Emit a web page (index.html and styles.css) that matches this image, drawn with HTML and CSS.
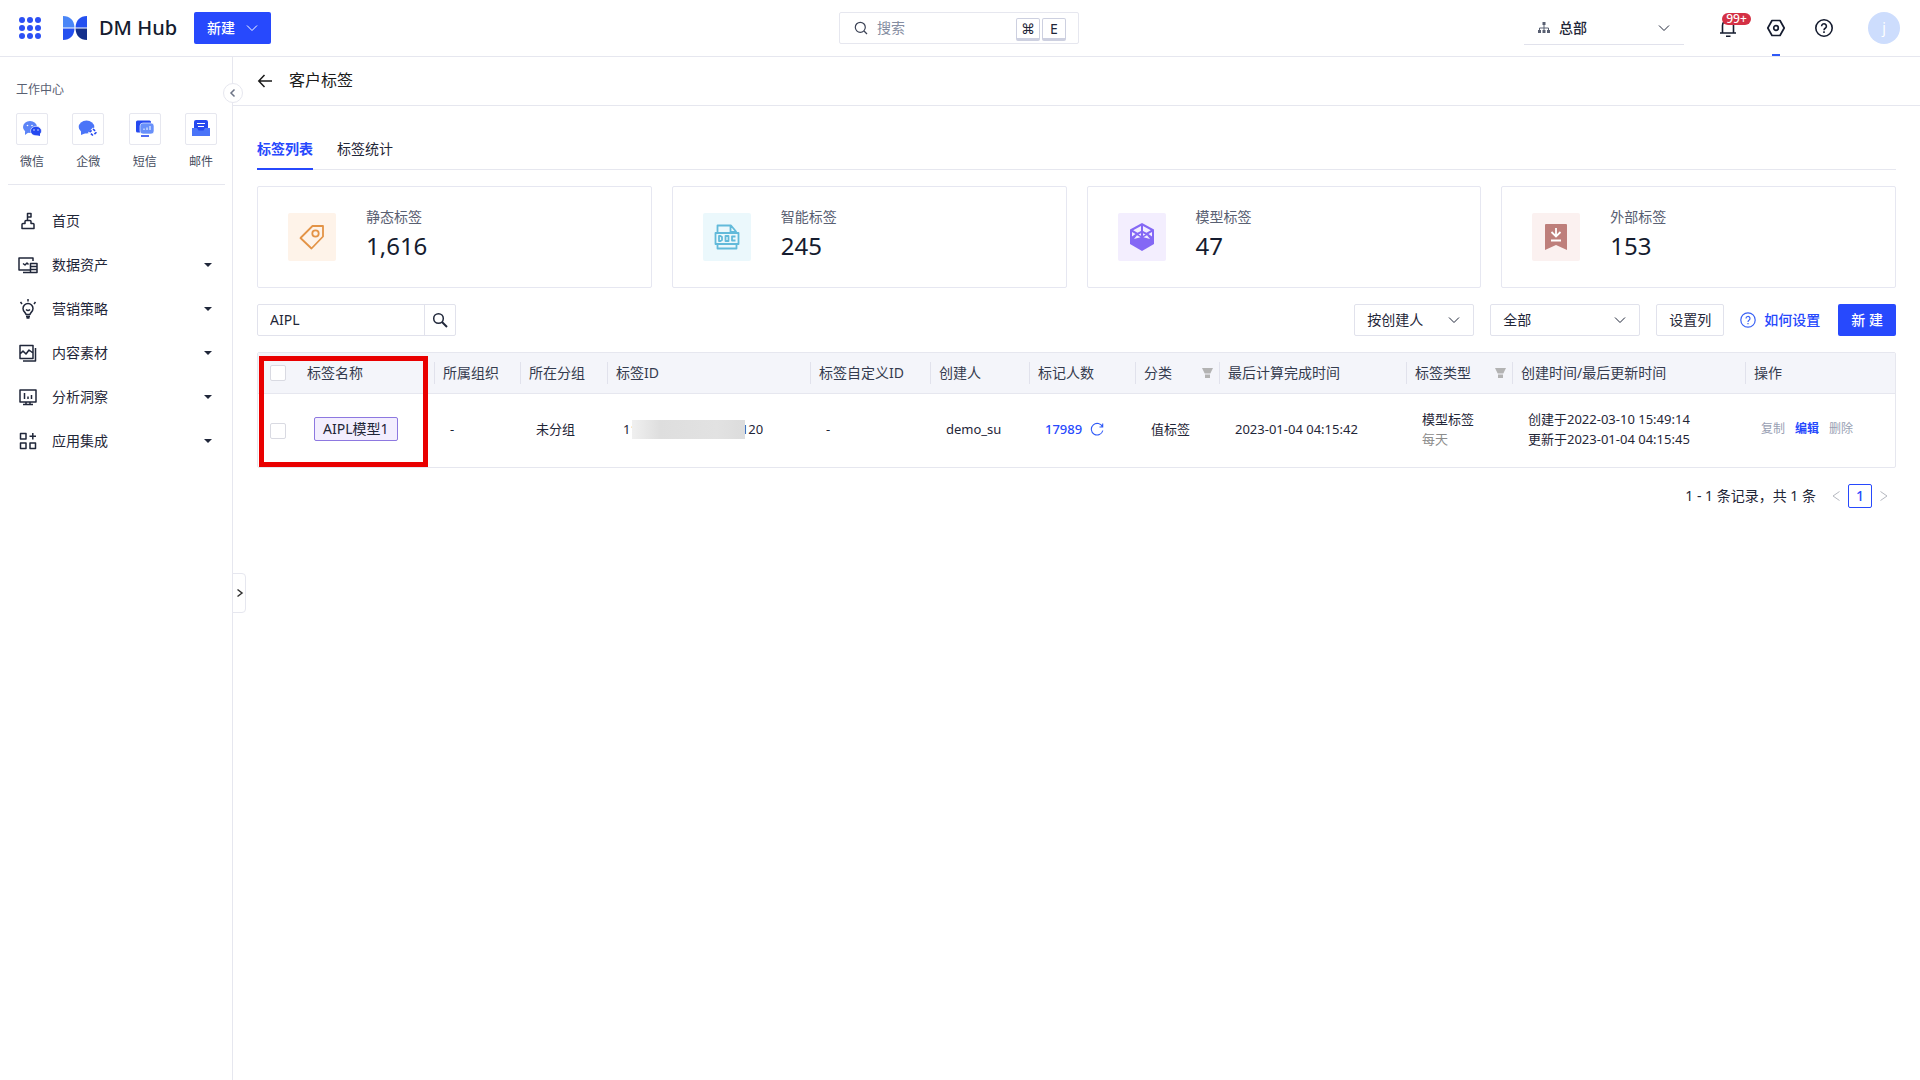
FILE: index.html
```html
<!DOCTYPE html>
<html lang="zh-CN">
<head>
<meta charset="utf-8">
<title>客户标签 - DM Hub</title>
<link rel="stylesheet" href="styles.css">
</head>
<body>
<header class="topbar">
  <div class="topbar-left">
    <button class="icon-btn apps" aria-label="应用">
      <svg width="24" height="24" viewBox="0 0 24 24" fill="#2c50f5"><circle cx="4" cy="4" r="3"/><circle cx="12" cy="4" r="3"/><circle cx="20" cy="4" r="3"/><circle cx="4" cy="12" r="3"/><circle cx="12" cy="12" r="3"/><circle cx="20" cy="12" r="3"/><circle cx="4" cy="20" r="3"/><circle cx="12" cy="20" r="3"/><circle cx="20" cy="20" r="3"/></svg>
    </button>
    <a class="brand" href="#">
      <svg width="24" height="24" viewBox="0 0 24 24"><path fill="#4a86f7" d="M0 0c7 0 11 4 11.500 11.500H0z"/><path fill="#2450f0" d="M24 0c-7 0-11 4-11.500 11.500H24z"/><path fill="#2450f0" d="M0 12.500h11.500C11 20 7 24 0 24z"/><path fill="#14308c" d="M24 12.500H12.500C13 20 17 24 24 24z"/></svg>
      <span>DM Hub</span>
    </a>
    <button class="btn-primary btn-create">新建
      <svg width="12" height="12" viewBox="0 0 12 12" fill="none" stroke="#fff"><path d="M1 3.500l5 5 5-5"/></svg>
    </button>
  </div>
  <div class="global-search">
    <svg width="14" height="14" viewBox="0 0 14 14" fill="none" stroke="#3c4356" stroke-width="1.200"><circle cx="6.300" cy="6.300" r="5"/><path d="M10 10l3 3"/></svg>
    <input type="text" placeholder="搜索" aria-label="搜索">
    <kbd>⌘</kbd><kbd>E</kbd>
  </div>
  <div class="topbar-right">
    <label class="org">
      <svg width="12" height="12" viewBox="0 0 12 12" fill="none" stroke="#596072"><path d="M6 3v5M1.500 8V6h9v2"/><g fill="#596072" stroke="none"><rect x="4.500" y="0" width="3" height="3"/><rect x="0" y="8" width="3" height="3"/><rect x="4.500" y="8" width="3" height="3"/><rect x="9" y="8" width="3" height="3"/></g></svg>
      <select aria-label="组织"><option>总部</option></select>
      <svg class="chev" width="12" height="12" viewBox="0 0 12 12" fill="none" stroke="#20273a"><path d="M1 3.500l5 5 5-5"/></svg>
    </label>
    <button class="icon-btn bell" aria-label="通知">
      <svg width="20" height="20" viewBox="0 0 20 20" fill="none" stroke="#151c2f" stroke-width="1.600"><path d="M4.500 15V7.500a5.500 5.500 0 0111 0V15M2 15h16M8 18.200h4.500"/></svg>
      <span class="badge">99+</span>
    </button>
    <button class="icon-btn settings" aria-label="设置">
      <svg width="20" height="20" viewBox="0 0 20 20" fill="none" stroke="#151c2f" stroke-width="1.700" stroke-linejoin="round"><path d="M6 2.500h8l4.200 7.500-4.200 7.500H6L1.800 10z"/><circle cx="10" cy="10" r="2.300"/></svg>
    </button>
    <button class="icon-btn" aria-label="帮助">
      <svg width="20" height="20" viewBox="0 0 20 20" fill="none" stroke="#151c2f" stroke-width="1.600"><circle cx="10" cy="10" r="8.200"/><path d="M7.600 8.200a2.400 2.400 0 114 1.800C10.500 10.700 10 11 10 12.200M10 13.300v1.600"/></svg>
    </button>
    <button class="avatar" aria-label="账户">j</button>
  </div>
</header>
<div class="layout">
  <aside class="sidebar">
    <h2>工作中心</h2>
    <div class="shortcuts">
      <a href="#"><i><svg width="20" height="20" viewBox="0 0 20 20"><ellipse cx="8" cy="8" rx="7" ry="6" fill="#5c84f7"/><path d="M3 12v4l4-3z" fill="#5c84f7"/><ellipse cx="14" cy="12" rx="5.500" ry="4.700" fill="#2549f0" stroke="#fff" stroke-width=".6"/><path d="M18 14v3l-4-1z" fill="#2549f0"/><g fill="#fff"><circle cx="5.500" cy="6.500" r=".8"/><circle cx="10" cy="6.500" r=".8"/><circle cx="12" cy="11" r=".7"/><circle cx="16" cy="11" r=".7"/></g></svg></i><span>微信</span></a>
      <a href="#"><i><svg width="20" height="20" viewBox="0 0 20 20"><ellipse cx="8.500" cy="8" rx="7.800" ry="6.500" fill="#4a74f8"/><path d="M3 12v4l5-2z" fill="#4a74f8"/><path d="M15 8.500l5 5-5 4-5-4z" fill="#fff"/><path d="M15 10l3.500 3.200L15 16.500l-3.500-3.300z" fill="none" stroke="#2549f0" stroke-width="1.600" stroke-dasharray="2.800 2"/></svg></i><span>企微</span></a>
      <a href="#"><i><svg width="20" height="20" viewBox="0 0 20 20"><rect x="1" y="1.500" width="15" height="12" rx="1.500" fill="#2549f0"/><rect x="5" y="4" width="14" height="11" rx="3" fill="#6890fa" stroke="#fff" stroke-width=".6"/><path d="M9 11V9.500M12 11V8.500M15 11V7" stroke="#fff"/><path d="M6 17h8" stroke="#2549f0" stroke-width="1.600"/></svg></i><span>短信</span></a>
      <a href="#"><i><svg width="20" height="20" viewBox="0 0 20 20"><path d="M3 3q0-2 2-2h10q2 0 2 2v9H3z" fill="#2549f0"/><path d="M6 4.500h8M7 7.500h6" stroke="#fff"/><path d="M1 9h5l1.500 2.500h5L14 9h5v8H1z" fill="#4a74f8"/></svg></i><span>邮件</span></a>
    </div>
    <nav class="menu">
      <a href="#"><svg width="20" height="20" viewBox="0 0 20 20"><path d="M4 17.500v-4q0-1 1-1h2v-2q0-1 1-1h4q1 0 1 1v2h2q1 0 1 1v4zM9.500 9.500V2.500H13v3.500H9.500"/></svg><span>首页</span></a>
      <a href="#"><svg width="20" height="20" viewBox="0 0 20 20"><path d="M12 15H1V3h14v3M5 8.500l2 1.500 2-2 1.500 1.500M5 17.500h7M12.500 8.500h6.500v9h-6.500zM12.500 11.500H19M12.500 14.500H19"/></svg><span>数据资产</span><b></b></a>
      <a href="#"><svg width="20" height="20" viewBox="0 0 20 20"><path d="M8 15.500c0-2-3-2.500-3-6a5 5 0 0110 0c0 3.500-3 4-3 6zM8 17.500h4M8.500 19h3M8 10.500q2 2 4 0M10 0v2.500M2.500 3L4 5M17.500 3L16 5"/></svg><span>营销策略</span><b></b></a>
      <a href="#"><svg width="20" height="20" viewBox="0 0 20 20"><path d="M2 2.500h13v13H2zM17.500 5v13H5M2 11l3-3 3 3 3-4 4 3"/></svg><span>内容素材</span><b></b></a>
      <a href="#"><svg width="20" height="20" viewBox="0 0 20 20"><path d="M2 3h16v12H2zM6.500 6v6M10 9.500V12M13.500 8v4M8 15v2.500M12 15v2.500M5 17.500h10"/></svg><span>分析洞察</span><b></b></a>
      <a href="#"><svg width="20" height="20" viewBox="0 0 20 20"><path d="M2.500 2.500H8V8H2.500zM2.500 12H8v5.500H2.500zM12 12h5.500v5.500H12zM14.800 2v6.500M11.500 5.200H18"/></svg><span>应用集成</span><b></b></a>
    </nav>
    <button class="collapse" aria-label="收起菜单"><svg width="10" height="10" viewBox="0 0 10 10" fill="none" stroke="#6d7486" stroke-width="1.500"><path d="M6.500 1.500L3 5l3.500 3.500"/></svg></button>
    <button class="drawer" aria-label="展开面板"><svg width="8" height="10" viewBox="0 0 8 10" fill="none" stroke="#333" stroke-width="1.500"><path d="M1.500 1.500L6 5 1.500 8.500"/></svg></button>
  </aside>
  <main class="main">
    <div class="page-head">
      <a class="back" href="#" aria-label="返回"><svg width="16" height="16" viewBox="0 0 16 16" fill="none" stroke="#1a1a1a" stroke-width="1.500"><path d="M15 8H2M7.500 2L1.800 8l5.700 6"/></svg></a>
      <h1>客户标签</h1>
    </div>
    <div class="content">
      <div class="tabs"><a class="active" href="#">标签列表</a><a href="#">标签统计</a></div>
      <section class="cards">
        <article class="card"><i class="tile orange"><svg width="26" height="26" viewBox="0 0 26 26" fill="none" stroke="#e39346" stroke-width="1.800" stroke-linejoin="round"><path d="M13.500 2H24v10.500L12.500 24.500 1.500 14z"/><circle cx="16.500" cy="9.500" r="3.200"/></svg></i><div><p>静态标签</p><strong>1,616</strong></div></article>
        <article class="card"><i class="tile cyan"><svg width="26" height="26" viewBox="0 0 26 26" fill="none" stroke="#62bada" stroke-width="1.800" stroke-linejoin="round"><path d="M3.500 9V1.500H17l5 6V9M16.500 2v6H22M1.500 9h23v11h-23zM3.500 20v4.500h19V20M5 12v5h1.500l1.500-1v-3l-1.500-1zM11.500 12h3v5h-3zM21.500 12.500H18v4h3.500"/></svg></i><div><p>智能标签</p><strong>245</strong></div></article>
        <article class="card"><i class="tile purple"><svg width="26" height="28" viewBox="0 0 26 28"><path d="M13 0l12 6.500v14.500L13 28 1 21V6.500z" fill="#8468f5"/><path d="M12 3v5L8.500 9.800 4.200 7.300zM14 3v5l3.500 1.800 4.300-2.500zM3 9l3.500 2L3 13.500zM23 9l-3.500 2 3.500 2.500zM12 10.200v2.600L9.500 11.500zM14 10.200v2.600l2.500-1.300zM8 12.300l3.500 2L5 16zM18 12.300l-3.500 2L21 16z" fill="#f3eefe"/></svg></i><div><p>模型标签</p><strong>47</strong></div></article>
        <article class="card"><i class="tile red"><svg width="26" height="28" viewBox="0 0 26 28"><path d="M2 2q0-1 1-1h20q1 0 1 1v25l-11-5-11 5z" fill="#be7f7b"/><path d="M13 5v8M8.500 9l4.500 4.500L17.500 9M8 17.500h10" fill="none" stroke="#fff" stroke-width="1.800"/></svg></i><div><p>外部标签</p><strong>153</strong></div></article>
      </section>
      <div class="toolbar">
        <form class="filter">
          <input type="text" value="AIPL" aria-label="标签名称">
          <button type="button" aria-label="查询"><svg width="16" height="16" viewBox="0 0 16 16" fill="none" stroke="#20273a" stroke-width="1.500"><circle cx="6.500" cy="6.500" r="4.800"/><path d="M10 10l5 5" stroke-width="2"/></svg></button>
        </form>
        <div class="tools">
          <label class="select"><select aria-label="筛选方式"><option>按创建人</option></select><svg class="chev" width="12" height="12" viewBox="0 0 12 12" fill="none" stroke="#20273a"><path d="M1 3.500l5 5 5-5"/></svg></label>
          <label class="select wide"><select aria-label="创建人"><option>全部</option></select><svg class="chev" width="12" height="12" viewBox="0 0 12 12" fill="none" stroke="#20273a"><path d="M1 3.500l5 5 5-5"/></svg></label>
          <button class="btn-plain">设置列</button>
          <a class="howto" href="#"><svg width="16" height="16" viewBox="0 0 16 16" fill="none" stroke="#3a62f5" stroke-width="1.200"><circle cx="8" cy="8" r="7.200"/><path d="M6 6.500a2 2 0 113 1.700C8.200 8.700 8 9 8 9.900M8 11v1.200"/></svg>如何设置</a>
          <button class="btn-primary">新 建</button>
        </div>
      </div>
      <div class="table-wrap">
        <table>
          <colgroup><col class="w40"><col class="w136"><col class="w86"><col class="w87"><col class="w203"><col class="w120"><col class="w99"><col class="w106"><col class="w84"><col class="w187"><col class="w106"><col class="w233"><col class="w150"></colgroup>
          <thead><tr>
            <th class="check"><input type="checkbox" aria-label="全选"></th><th>标签名称</th><th class="sep">所属组织</th><th class="sep">所在分组</th><th class="sep">标签ID</th><th class="sep">标签自定义ID</th><th class="sep">创建人</th><th class="sep">标记人数</th>
            <th class="sep"><div class="with-filter">分类<svg width="12" height="12" viewBox="0 0 12 12" fill="#b3b3b3"><path d="M1 1h11L9.300 6.500H3.700zM4 7.500h5V11H4z"/></svg></div></th>
            <th class="sep">最后计算完成时间</th>
            <th class="sep"><div class="with-filter">标签类型<svg width="12" height="12" viewBox="0 0 12 12" fill="#b3b3b3"><path d="M1 1h11L9.300 6.500H3.700zM4 7.500h5V11H4z"/></svg></div></th>
            <th class="sep">创建时间/最后更新时间</th><th class="sep">操作</th>
          </tr></thead>
          <tbody><tr>
            <td class="check"><input type="checkbox" aria-label="选择 AIPL模型1"></td>
            <td><span class="tag">AIPL模型1</span></td><td>-</td><td>未分组</td>
            <td><span class="masked"><span>11</span><i></i><span>120</span></span></td>
            <td>-</td><td>demo_su</td>
            <td><a class="count" href="#">17989<svg width="14" height="14" viewBox="0 0 14 14" fill="none" stroke="#2f5af7" stroke-width="1.100"><path d="M12.500 5A5.800 5.800 0 1012.800 8.500M12.700 1.500V5H9.500"/></svg></a></td>
            <td>值标签</td><td>2023-01-04 04:15:42</td>
            <td>模型标签<br><span class="muted">每天</span></td>
            <td>创建于2022-03-10 15:49:14<br>更新于2023-01-04 04:15:45</td>
            <td><div class="actions"><button disabled>复制</button><button>编辑</button><button disabled>删除</button></div></td>
          </tr></tbody>
        </table>
        <div class="highlight"></div>
      </div>
      <div class="pager">
        <span>1 - 1 条记录，共 1 条</span>
        <button aria-label="上一页"><svg width="10" height="12" viewBox="0 0 10 12" fill="none" stroke="#b5b8c0"><path d="M8.500 1.500L2 6l6.500 4.500"/></svg></button>
        <button class="current">1</button>
        <button aria-label="下一页"><svg width="10" height="12" viewBox="0 0 10 12" fill="none" stroke="#b5b8c0"><path d="M1.500 1.500L8 6l-6.500 4.500"/></svg></button>
      </div>
    </div>
  </main>
</div>
</body>
</html>
```
FILE: styles.css
```css
* { box-sizing: border-box; }
body {
  margin: 0;
  min-height: 100vh;
  display: flex;
  flex-direction: column;
  background: #fff;
  color: #1f2638;
  font: 14px/20px "Noto Sans", "Noto Sans CJK SC", sans-serif;
}
h1, h2, p { margin: 0; font-weight: 400; }
a { color: inherit; text-decoration: none; }
i { font-style: normal; }
svg { display: block; flex: none; }
button, input, select { font: inherit; color: inherit; margin: 0; }
button { padding: 0; border: 0; background: none; cursor: pointer; }
select { appearance: none; border: 0; background: none; padding: 0; width: 100%; outline: 0; }

.topbar {
  display: grid;
  grid-template-columns: 1fr 240px 1fr;
  align-items: center;
  height: 57px;
  padding: 0 20px 0 18px;
  border-bottom: 1px solid #e6e7ef;
}
.topbar-left, .brand, .topbar-right { display: flex; align-items: center; }
.brand { gap: 12px; margin: 0 17px 0 21px; font-size: 20px; font-weight: 500; color: #151c2f; }
.btn-primary {
  height: 32px;
  padding: 0 13px;
  border-radius: 2px;
  background: #2749fd;
  color: #fff;
  font-weight: 500;
}
.btn-create { display: flex; align-items: center; gap: 11px; }
.global-search {
  display: flex;
  align-items: center;
  height: 32px;
  padding: 0 12px 0 14px;
  border: 1px solid #e6e7ef;
  border-radius: 2px;
}
.global-search input { flex: 1; min-width: 0; border: 0; outline: 0; padding: 0 9px; background: none; }
.global-search input::placeholder { color: #858da1; opacity: 1; }
kbd {
  width: 24px;
  height: 23px;
  margin: 3px 0 0 2px;
  border: 1px solid #cdd0e0;
  border-bottom-width: 3px;
  border-radius: 2px;
  font: 14px/19px "Noto Sans", "DejaVu Sans", sans-serif;
  text-align: center;
}
.topbar-right { justify-content: flex-end; gap: 28px; }
.org {
  display: flex;
  align-items: center;
  gap: 9px;
  width: 160px;
  height: 34px;
  margin-right: 6px;
  padding: 0 14px;
  border-bottom: 1px solid #e1e2ec;
  font-weight: 500;
}
.icon-btn { position: relative; display: flex; }
.badge {
  position: absolute;
  left: 4px;
  top: -5px;
  width: 29px;
  height: 12px;
  border-radius: 6px;
  background: #d43145;
  color: #fff;
  font-size: 12px;
  font-weight: 500;
  line-height: 12px;
}
.settings::after {
  content: "";
  position: absolute;
  left: 6px;
  bottom: -18px;
  width: 8px;
  height: 2px;
  background: #2f5af7;
}
.avatar { width: 32px; height: 32px; margin-left: 6px; border-radius: 50%; background: #cdddfd; color: #fff; }

.layout { flex: 1; display: flex; }
.sidebar { position: relative; flex: none; width: 233px; border-right: 1px solid #e6e7ef; }
.sidebar h2 { padding: 23px 16px 13px; font-size: 12px; line-height: 20px; color: #596072; }
.shortcuts {
  display: flex;
  justify-content: space-between;
  margin: 0 7px 0 8px;
  padding: 0 8px 12px;
  border-bottom: 1px solid #e6e7ef;
}
.shortcuts a { display: grid; gap: 7px; font-size: 12px; text-align: center; color: #454c5e; }
.shortcuts i {
  display: grid;
  place-items: center;
  width: 32px;
  height: 32px;
  border: 1px solid #e6e7ef;
  border-radius: 2px;
}
.menu { padding-top: 14px; }
.menu a { display: flex; align-items: center; height: 44px; padding: 0 20px 0 18px; gap: 14px; }
.menu svg { fill: none; stroke: #20273a; stroke-width: 1.5; stroke-linejoin: round; }
.menu b { margin-left: auto; border: solid transparent; border-width: 4px 4px 0; border-top-color: #20273a; }
.collapse, .drawer { position: absolute; display: grid; place-items: center; border: 1px solid #e6e7ef; background: #fff; }
.collapse { right: -11px; top: 26px; width: 20px; height: 20px; border-radius: 50%; }
.drawer { left: 232px; top: 516px; width: 14px; height: 40px; padding-left: 2px; border-radius: 0 4px 4px 0; }

.main { flex: 1; min-width: 0; }
.page-head { display: flex; align-items: center; gap: 16px; height: 49px; padding-left: 24px; border-bottom: 1px solid #e6e7ef; }
.page-head h1 { padding-bottom: 2px; font-size: 16px; color: #1a1a1a; }
.content { padding: 24px 24px 0; }
.tabs { display: flex; gap: 24px; height: 40px; border-bottom: 1px solid #e6e7ef; }
.tabs a { height: 40px; padding-top: 9px; border-bottom: 2px solid transparent; }
.tabs .active { border-color: #2749fd; color: #2749fd; font-weight: 700; }
.cards { display: grid; grid-template-columns: repeat(4, 1fr); gap: 20px; margin: 16px 0; }
.card { display: flex; align-items: center; gap: 30px; height: 102px; padding: 0 30px; border: 1px solid #e6e7f1; border-radius: 2px; }
.card div { padding-bottom: 5px; }
.card p { color: #596072; }
.card strong { display: block; margin-top: 3px; font-size: 24px; line-height: 32px; font-weight: 400; color: #151c2f; }
.tile { display: grid; place-items: center; width: 48px; height: 48px; border-radius: 2px; }
.orange { background: #fef3e9; }
.cyan { background: #ebf8fc; }
.purple { background: #f3eefe; }
.red { background: #fbf1f0; }

.toolbar, .tools, .filter { display: flex; }
.toolbar { justify-content: space-between; margin-bottom: 16px; }
.filter { width: 199px; border: 1px solid #e1e2ec; border-radius: 2px; }
.filter input { flex: 1; min-width: 0; height: 30px; padding: 0 12px 2px; border: 0; outline: 0; background: none; }
.filter button { display: grid; place-items: center; width: 31px; border-left: 1px solid #e1e2ec; }
.tools { gap: 16px; align-items: center; }
.select { display: flex; align-items: center; width: 120px; height: 32px; padding: 0 13px 0 12px; border: 1px solid #e1e2ec; border-radius: 2px; }
.wide { width: 150px; }
.btn-plain { height: 32px; padding: 0 12px; border: 1px solid #e1e2ec; border-radius: 2px; }
.howto { display: flex; align-items: center; gap: 8px; padding-right: 2px; color: #2749fd; font-weight: 500; }

.table-wrap { position: relative; }
table { width: 100%; table-layout: fixed; border-collapse: separate; border-spacing: 0; border: 1px solid #e6e7ef; border-radius: 2px; }
.w40 { width: 40px; }
.w84 { width: 84px; }
.w86 { width: 86px; }
.w87 { width: 87px; }
.w99 { width: 99px; }
.w106 { width: 106px; }
.w120 { width: 120px; }
.w136 { width: 136px; }
.w150 { width: 150px; }
.w187 { width: 187px; }
.w203 { width: 203px; }
.w233 { width: 233px; }
th { height: 41px; padding: 0 0 1px 9px; background: #f4f5fa; border-bottom: 1px solid #e6e7ef; font-weight: 400; text-align: left; white-space: nowrap; color: #343b4e; }
.sep { background: linear-gradient(#e1e2ec, #e1e2ec) 0 50% / 1px 22px no-repeat #f4f5fa; }
.with-filter { display: flex; align-items: center; justify-content: space-between; padding-right: 6px; }
td { height: 73px; padding: 0 0 3px 16px; font-size: 13px; white-space: nowrap; }
.check { padding: 0 0 0 12px; }
input[type="checkbox"] { display: block; appearance: none; width: 16px; height: 16px; border: 1px solid #d9dae2; border-radius: 2px; background: #fff; }
.tag { display: inline-block; height: 24px; padding: 0 8px; border: 1px solid #8d78e0; border-radius: 2px; background: #f3eefe; font-size: 14px; line-height: 22px; }
.masked { display: flex; align-items: center; }
.masked i { position: relative; width: 113px; height: 19px; margin: 0 -4px 0 -6px; background: linear-gradient(90deg, #f0f0f0, #dedede 25%, #e2e2e2 75%, #dcdcdc); }
.count { display: flex; align-items: center; gap: 8px; color: #2749fd; font-weight: 500; }
.muted { color: #8c8c8c; }
.actions { display: flex; gap: 10px; }
.actions button { font-size: 12px; color: #2749fd; font-weight: 700; }
.actions button:disabled { color: #98a0b3; font-weight: 400; }
.highlight { position: absolute; left: 2px; top: 4px; width: 169px; height: 111px; border: 5px solid #e90000; pointer-events: none; }

.pager { display: flex; align-items: center; justify-content: flex-end; gap: 7px; margin-top: 16px; padding-right: 7px; }
.pager span { margin-right: 8px; }
.current { width: 24px; height: 24px; border: 1px solid #2749fd; border-radius: 2px; color: #2749fd; font-weight: 500; }
```
